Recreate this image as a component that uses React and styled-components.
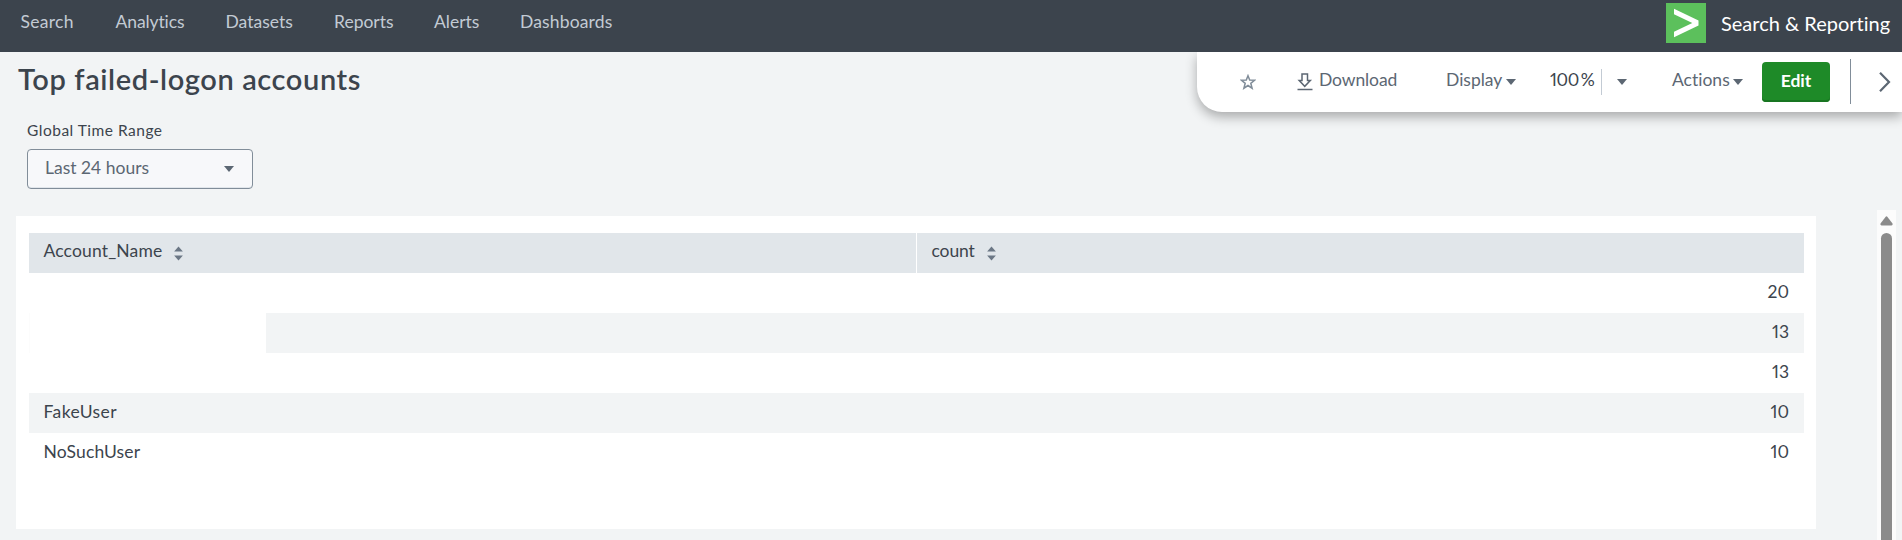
import React from "react";
import styled, { createGlobalStyle } from "styled-components";

const GlobalStyle = createGlobalStyle`
  *, *::before, *::after { box-sizing: border-box; }
  body {
    margin: 0;
    background: #f2f4f5;
    color: #3c444d;
    font-family: Lato, "Open Sans", sans-serif;
    font-size: 17.5px;
    font-variant-ligatures: none;
    font-variant-numeric: proportional-nums;
    overflow: hidden;
  }
`;

const Page = styled.div`
  height: 540px;
  display: flex;
  flex-direction: column;
  overflow: hidden;
`;

/* Text whose tracking is tuned per label */
const Label = styled.span`
  display: block;
  flex: none;
  white-space: nowrap;
  width: ${(p) => (p.$w ? `${p.$w}px` : "auto")};
  letter-spacing: ${(p) => p.$track || 0}px;
`;

const TopBar = styled.header`
  flex: none;
  height: 52px;
  display: flex;
  justify-content: space-between;
  padding: 0 0 0 20.5px;
  background: #3c444d;
`;

const Nav = styled.nav`
  display: flex;
  gap: 41px;
  padding-top: 11px;
  line-height: 22px;
  color: #c3cbd4;
`;

const AppBrand = styled.div`
  display: flex;
  width: 236px;
  padding-top: 3px;
  gap: 15px;
  color: #fff;
  font-size: 20px;
  line-height: 40px;
`;

const BrandText = styled(Label)`
  line-height: 40px;
`;

const Heading = styled.div`
  flex: none;
  display: flex;
  justify-content: space-between;
  height: 60px;
`;

const Title = styled.h1`
  margin: 0;
  padding: 10px 0 0 18px;
  font-size: 29px;
  line-height: 34px;
  font-weight: 600;
  letter-spacing: ${(p) => p.$track}px;
  white-space: nowrap;
`;

const Toolbar = styled.div`
  display: flex;
  align-items: flex-start;
  width: 705px;
  height: 60px;
  padding-left: 43px;
  background: #fff;
  border-bottom-left-radius: 25px;
  box-shadow: 0 5px 12px rgba(0, 0, 0, 0.3);
  clip-path: inset(0 0 -30px -30px);
  color: #5c6773;
  line-height: 22px;
`;

const Tool = styled.div`
  display: flex;
  align-items: flex-start;
  flex: none;
  width: ${(p) => p.$w}px;
  padding-top: ${(p) => p.$top ?? 17}px;
  color: ${(p) => p.$color || "inherit"};
`;

const DownloadIcon = styled.svg`
  flex: none;
  margin: 4px 6px 0 0;
`;

const Zoom = styled(Label)`
  word-spacing: -2px;
`;

const Caret = styled.i`
  flex: none;
  width: 0;
  height: 0;
  margin: ${(p) => p.$m || "0"};
  border: 5px solid transparent;
  border-top: 6px solid #5c6773;
  border-bottom: 0;
`;

const Divider = styled.i`
  flex: none;
  width: 1px;
  height: ${(p) => p.$h}px;
  margin: ${(p) => p.$m};
  background: ${(p) => p.$color};
`;

const EditButton = styled.button`
  flex: none;
  width: 68px;
  height: 40px;
  margin: 10px 20px 0 0;
  padding: 0 0 3px;
  border: 0;
  border-radius: 4px;
  background: #1e8a28;
  box-shadow: inset 0 -2px 0 #187521;
  color: #fff;
  font: 700 17.5px/36px Lato, sans-serif;
  letter-spacing: ${(p) => p.$track}px;
`;

const Body = styled.main`
  flex: 1;
  display: flex;
  justify-content: space-between;
  min-height: 0;
  padding-right: 6px;
`;

const Content = styled.div`
  width: 1800px;
  margin-left: 16px;
`;

const Filter = styled.div`
  height: 104px;
  padding: 8px 0 0 11px;
`;

const FilterLabel = styled(Label)`
  font-size: 15.5px;
  line-height: 20px;
`;

const Select = styled.div`
  display: flex;
  justify-content: space-between;
  width: 226px;
  height: 40px;
  margin-top: 9px;
  padding: 7px 18px 0 17px;
  border: 1px solid #818d99;
  border-radius: 4px;
  background: #f7f8fa;
  box-shadow: inset 0 -1px 0 #e1e6eb;
  color: #5c6773;
  line-height: 22px;
`;

const Panel = styled.section`
  height: 313px;
  padding: 17px 12px 0 13px;
  background: #fff;
`;

const Row = styled.div`
  display: grid;
  grid-template-columns: 887px 888px;
  height: 40px;
  background: ${(p) => (p.$shaded ? "#f2f4f5" : "#fff")};
`;

const HeadRow = styled(Row)`
  background: #e1e6ea;
`;

const Cell = styled.div`
  display: flex;
  justify-content: ${(p) => (p.$numeric ? "flex-end" : "flex-start")};
  padding: 8px 15px 0 14.5px;
  line-height: 22px;
`;

const HeadCell = styled(Cell)`
  gap: 12px;
  padding-top: 7px;
  border-left: ${(p) => (p.$ruled ? "1px solid #fff" : "0")};
`;

const Blank = styled.div`
  width: 237px;
  height: 40px;
  margin: -8px 0 0 -14.5px;
  border-left: 1px solid #fcfcfc;
  background: #fff;
`;

const SortIcon = styled.svg`
  flex: none;
  margin-top: 6px;
`;

const ScrollTrack = styled.div`
  display: flex;
  flex-direction: column;
  align-items: center;
  width: 19px;
  margin-top: 98px;
  padding-top: 6px;
  background: #fcfcfc;
`;

const ScrollThumb = styled.div`
  flex: 1;
  width: 11px;
  margin-top: 7px;
  border-radius: 5.5px 5.5px 0 0;
  background: #8b8b8b;
`;

const NAV = [
  ["Search", 54, 0.3],
  ["Analytics", 69, -0.1],
  ["Datasets", 67.5, 0],
  ["Reports", 59, 0],
  ["Alerts", 45, 0],
  ["Dashboards", 93, 0.15],
];

const ROWS = [
  { name: "", count: 20 },
  { name: "", count: 13, blank: true },
  { name: "", count: 13 },
  { name: "FakeUser", count: 10, track: 0.4 },
  { name: "NoSuchUser", count: 10, track: 0.15 },
];

const Sort = () => (
  <SortIcon width="9" height="15" viewBox="0 0 9 15" fill="#6b7785">
    <path d="M4.5 0.5 8.9 5.500H.1Z" />
    <path d="M.1 9.500h8.800L4.5 14.5Z" />
  </SortIcon>
);

export default function App() {
  return (
    <Page>
      <GlobalStyle />
      <TopBar>
        <Nav>
          {NAV.map(([text, w, track]) => (
            <Label key={text} $w={w} $track={track}>{text}</Label>
          ))}
        </Nav>
        <AppBrand>
          <svg width="40" height="40" viewBox="0 0 40 40">
            <path fill="#5cc05c" d="M0 0h40v40H0z" />
            <path fill="#fff" d="M8 5.7 32.5 17.4v5L8 34.3v-5.600L26.300 20 8 11.300Z" />
          </svg>
          <BrandText $track={0}>Search &amp; Reporting</BrandText>
        </AppBrand>
      </TopBar>
      <Heading>
        <Title $track={0.6}>Top failed-logon accounts</Title>
        <Toolbar>
          <Tool $w={57} $top={22}>
            <svg width="16" height="16" viewBox="0 0 16 16" fill="none" stroke="#818d99" strokeWidth="1.5">
              <path d="M8 1.700 9.700 6.100 14.500 6.300 10.800 9.300 12.100 14.200 8 11.500 3.900 14.200 5.200 9.300 1.500 6.300 6.300 6.100Z" />
            </svg>
          </Tool>
          <Tool $w={149}>
            <DownloadIcon width="16" height="18" viewBox="0 0 16 18" fill="none" stroke="#5c6773" strokeWidth="1.5">
              <path d="M5 1h5.500v6.500h2.800L7.750 13.300 2.200 7.500H5Z" />
              <path d="M.5 16.500h15" />
            </DownloadIcon>
            <Label $track={-0.1}>Download</Label>
          </Tool>
          <Tool $w={104}>
            <Label $w={59.5} $track={0}>Display</Label>
            <Caret $m="10px 0 0" />
          </Tool>
          <Tool $w={51} $color="#3c444d">
            <Zoom $track={-0.4}>100 %</Zoom>
          </Tool>
          <Divider $h={26} $m="17px 14.5px 0 0" $color="#c3cbd4" />
          <Tool $w={55.5}>
            <Caret $m="10px 0 0" />
          </Tool>
          <Tool $w={90}>
            <Label $w={60.5} $track={0}>Actions</Label>
            <Caret $m="10px 0 0" />
          </Tool>
          <EditButton $track={0}>Edit</EditButton>
          <Divider $h={45} $m="7px 27px 0 0" $color="#818d99" />
          <Tool $w={14} $top={19}>
            <svg width="14" height="22" viewBox="0 0 14 22" fill="none" stroke="#5c6773" strokeWidth="2.200">
              <path d="M2 1.700 11 11 2 20.300" />
            </svg>
          </Tool>
        </Toolbar>
      </Heading>
      <Body>
        <Content>
          <Filter>
            <FilterLabel $track={0.5}>Global Time Range</FilterLabel>
            <Select>
              <Label $track={0}>Last 24 hours</Label>
              <Caret $m="9px 0 0" />
            </Select>
          </Filter>
          <Panel>
            <HeadRow>
              <HeadCell>
                <Label $w={118} $track={0.15}>Account_Name</Label>
                <Sort />
              </HeadCell>
              <HeadCell $ruled>
                <Label $w={43.5} $track={-0.1}>count</Label>
                <Sort />
              </HeadCell>
            </HeadRow>
            {ROWS.map((row, i) => (
              <Row key={i} $shaded={i % 2 === 1}>
                <Cell>
                  {row.blank ? <Blank /> : <Label $track={row.track}>{row.name}</Label>}
                </Cell>
                <Cell $numeric>
                  <Label>{row.count}</Label>
                </Cell>
              </Row>
            ))}
          </Panel>
        </Content>
        <ScrollTrack>
          <svg width="13" height="10" viewBox="0 0 13 10" fill="#8b8b8b">
            <path d="M5.500.900Q6.500-.200 7.500.900L12.500 7.500Q13 9.300 11.500 9.500H1.500Q0 9.300.5 7.500Z" />
          </svg>
          <ScrollThumb />
        </ScrollTrack>
      </Body>
    </Page>
  );
}
